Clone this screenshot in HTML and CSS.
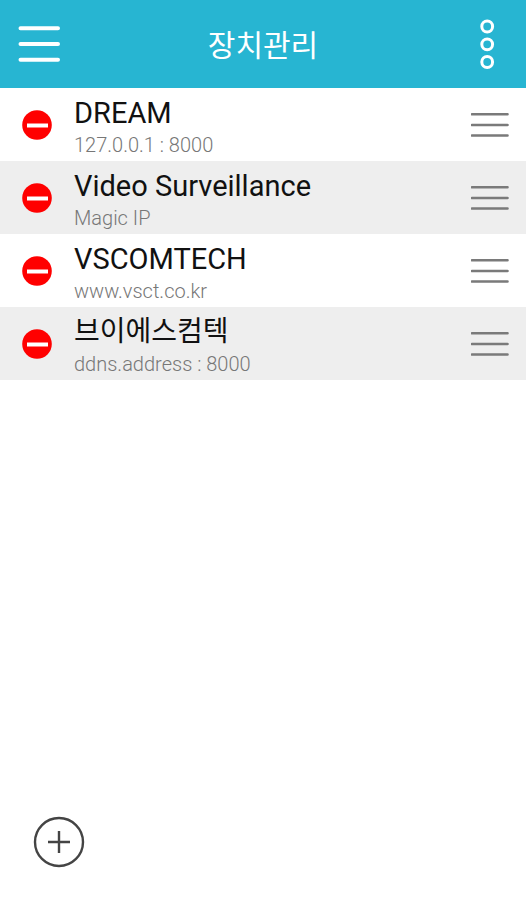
FILE: index.html
```html
<!DOCTYPE html>
<html lang="ko">
<head>
<meta charset="utf-8">
<meta name="viewport" content="width=device-width, initial-scale=1">
<title>장치관리</title>
<link rel="stylesheet" href="styles.css">
</head>
<body>
<header class="topbar">
  <button class="icon-button" type="button" aria-label="메뉴">
    <svg width="42" height="38" viewBox="0 0 42 38"><path d="M2.5 3.2H40M2.5 19H40M2.5 34.8H40"/></svg>
  </button>
  <h1 class="title">장치관리</h1>
  <button class="icon-button more" type="button" aria-label="더보기">
    <svg width="16" height="50" viewBox="0 0 16 50"><circle cx="8.2" cy="7.5" r="5.4"/><circle cx="8.2" cy="25.3" r="5.4"/><circle cx="8.2" cy="43" r="5.4"/></svg>
  </button>
</header>
<main class="content">
  <ul class="devices">
    <li class="device">
      <button class="icon-button remove" type="button" aria-label="DREAM 삭제"><svg width="30" height="30" viewBox="0 0 30 30"><circle cx="15" cy="15" r="14.8"/><path d="M5 15.5H26"/></svg></button>
      <div class="info"><h2 class="name">DREAM</h2><p class="address">127.0.0.1 : 8000</p></div>
      <button class="icon-button handle" type="button" aria-label="DREAM 순서 변경"><svg width="38" height="26" viewBox="0 0 38 26"><path d="M1 2.3H36.5M1 13H36.5M1 23.5H36.5"/></svg></button>
    </li>
    <li class="device">
      <button class="icon-button remove" type="button" aria-label="Video Surveillance 삭제"><svg width="30" height="30" viewBox="0 0 30 30"><circle cx="15" cy="15" r="14.8"/><path d="M5 15.5H26"/></svg></button>
      <div class="info"><h2 class="name">Video Surveillance</h2><p class="address">Magic IP</p></div>
      <button class="icon-button handle" type="button" aria-label="Video Surveillance 순서 변경"><svg width="38" height="26" viewBox="0 0 38 26"><path d="M1 2.3H36.5M1 13H36.5M1 23.5H36.5"/></svg></button>
    </li>
    <li class="device">
      <button class="icon-button remove" type="button" aria-label="VSCOMTECH 삭제"><svg width="30" height="30" viewBox="0 0 30 30"><circle cx="15" cy="15" r="14.8"/><path d="M5 15.5H26"/></svg></button>
      <div class="info"><h2 class="name">VSCOMTECH</h2><p class="address">www.vsct.co.kr</p></div>
      <button class="icon-button handle" type="button" aria-label="VSCOMTECH 순서 변경"><svg width="38" height="26" viewBox="0 0 38 26"><path d="M1 2.3H36.5M1 13H36.5M1 23.5H36.5"/></svg></button>
    </li>
    <li class="device">
      <button class="icon-button remove" type="button" aria-label="브이에스컴텍 삭제"><svg width="30" height="30" viewBox="0 0 30 30"><circle cx="15" cy="15" r="14.8"/><path d="M5 15.5H26"/></svg></button>
      <div class="info"><h2 class="name name-hangul">브이에스컴텍</h2><p class="address">ddns.address : 8000</p></div>
      <button class="icon-button handle" type="button" aria-label="브이에스컴텍 순서 변경"><svg width="38" height="26" viewBox="0 0 38 26"><path d="M1 2.3H36.5M1 13H36.5M1 23.5H36.5"/></svg></button>
    </li>
  </ul>
</main>
<footer class="footer">
  <button class="icon-button add" type="button" aria-label="장치 추가"><svg width="52" height="52" viewBox="0 0 52 52"><circle cx="26" cy="26" r="24"/><path d="M15 26H37M26 15V37"/></svg></button>
</footer>
</body>
</html>
```
FILE: styles.css
```css
* { box-sizing: border-box; }

body {
  margin: 0;
  min-height: 100vh;
  display: flex;
  flex-direction: column;
  background: #fff;
  color: #111;
  font-family: Roboto, "Noto Sans CJK KR", sans-serif;
}

.icon-button {
  display: block;
  flex: none;
  padding: 0;
  border: 0;
  background: none;
  cursor: pointer;
}

.icon-button svg {
  display: block;
  fill: none;
  stroke: #fff;
  stroke-width: 4;
  stroke-linecap: round;
}

.topbar {
  display: grid;
  grid-template-columns: 42px 1fr 42px;
  align-items: center;
  height: 88px;
  padding: 0 18px;
  background: #27b5d2;
}

.title {
  margin: 0;
  padding-top: 4px;
  color: #fff;
  font-size: 30px;
  font-weight: 400;
  line-height: 40px;
  text-align: center;
}

.more { justify-self: center; }

.icon-button.more svg { stroke-width: 3; }

.content { flex: 1; }

.devices {
  margin: 0;
  padding: 0;
  list-style: none;
}

.device {
  display: flex;
  align-items: center;
  gap: 22px;
  height: 73px;
  padding: 0 17px 0 22px;
}

.device:nth-child(even) { background: #eee; }

.info {
  flex: 1;
  min-width: 0;
  padding-top: 4px;
}

.name {
  margin: 0;
  font-size: 29px;
  font-weight: 400;
  line-height: 36px;
}

.name-hangul { font-size: 28px; }

.address {
  margin: 0;
  color: #777;
  font-size: 20px;
  font-weight: 300;
  line-height: 28px;
}

.remove circle {
  fill: #f00;
  stroke: none;
}

.icon-button.remove svg { stroke-linecap: butt; }

.icon-button.handle svg {
  stroke: #7a7a7a;
  stroke-width: 2.6;
}

.footer { padding: 0 33px 32px; }

.icon-button.add svg {
  stroke: #444;
  stroke-width: 2.4;
  stroke-linecap: butt;
}
```
